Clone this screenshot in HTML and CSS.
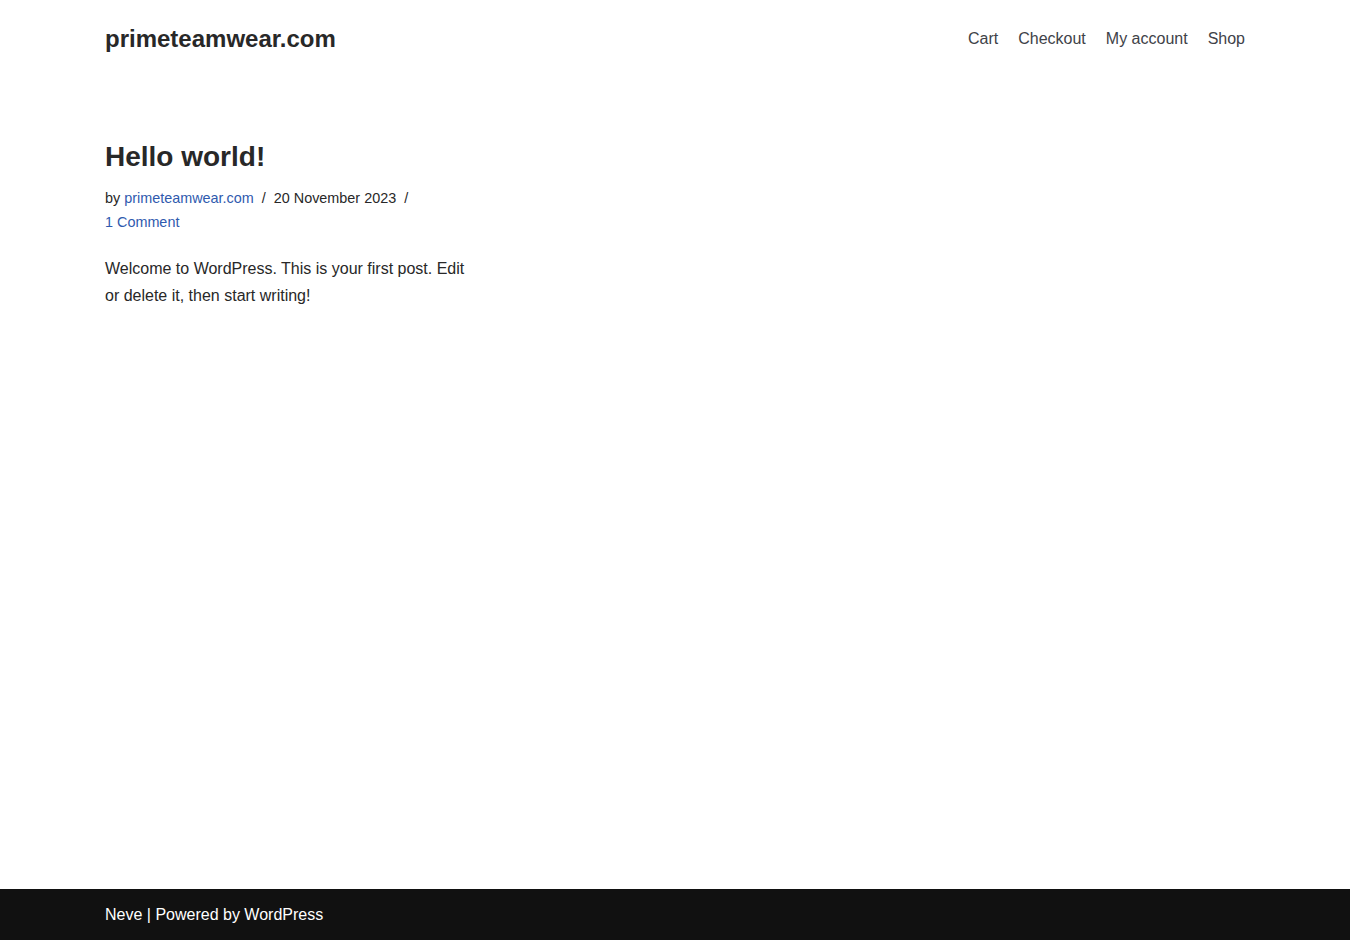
FILE: index.html
```html
<!DOCTYPE html>
<html lang="en">
<head>
    <meta charset="UTF-8">
    <meta name="viewport" content="width=device-width, initial-scale=1.0">
    <title>primeteamwear.com</title>
    <link rel="stylesheet" href="styles.css">
</head>

<body>
    <div class="wrapper">
        <header class="site_header">
            <div class="container header_row">
                <a class="site_title" href="#">primeteamwear.com</a>
                <nav class="main_nav">
                    <a href="#">Cart</a>
                    <a href="#">Checkout</a>
                    <a href="#">My account</a>
                    <a href="#">Shop</a>
                </nav>
            </div>
        </header>

        <main class="site_main">
            <div class="container">
                <div class="posts">
                    <article class="post">
                        <h2 class="post_title"><a href="#">Hello world!</a></h2>
                        <p class="post_meta">
                            by <a href="#">primeteamwear.com</a><span class="sep">/</span>20 November 2023<span class="sep">/</span><br>
                            <a href="#">1 Comment</a>
                        </p>
                        <p class="post_excerpt">Welcome to WordPress. This is your first post. Edit or delete it, then start writing!</p>
                    </article>
                </div>
            </div>
        </main>

        <footer class="site_footer">
            <div class="container">
                <a href="#">Neve</a> | Powered by <a href="#">WordPress</a>
            </div>
        </footer>
    </div>
</body>
</html>
```

FILE: styles.css
```css
html, body {
    margin: 0;
    padding: 0;
    font-family: "Liberation Sans", Arial, sans-serif;
    color: #282828;
    background: #fff;
}

a {
    text-decoration: none;
}

.wrapper {
    display: flex;
    flex-direction: column;
    min-height: 100vh;
}

.container {
    max-width: 1140px;
    margin: 0 auto;
    padding: 0 15px;
}

.header_row {
    display: flex;
    justify-content: space-between;
    align-items: center;
    height: 78px;
}

.site_title {
    font-size: 24px;
    font-weight: 700;
    color: #282828;
}

.main_nav {
    display: flex;
    gap: 20px;
}

.main_nav a {
    font-size: 16px;
    color: #404248;
}

.site_main {
    flex: 1;
    padding-top: 61px;
}

.posts {
    display: grid;
    grid-template-columns: repeat(3, 1fr);
    gap: 20px;
}

.post_title {
    margin: 0;
    font-size: 28px;
    line-height: 36px;
    font-weight: 700;
}

.post_title a {
    color: #282828;
}

.post_meta {
    margin: 11px 0 0;
    font-size: 14.4px;
    line-height: 24px;
    color: #282828;
}

.post_meta a {
    color: #2f5aae;
}

.sep {
    margin: 0 8px;
}

.post_excerpt {
    margin: 21px 0 0;
    font-size: 16px;
    line-height: 27px;
}

.site_footer {
    background: #111;
    color: #fff;
    font-size: 16px;
    line-height: 20px;
    padding: 16px 0 15px;
}

.site_footer a {
    color: #fff;
}
```
